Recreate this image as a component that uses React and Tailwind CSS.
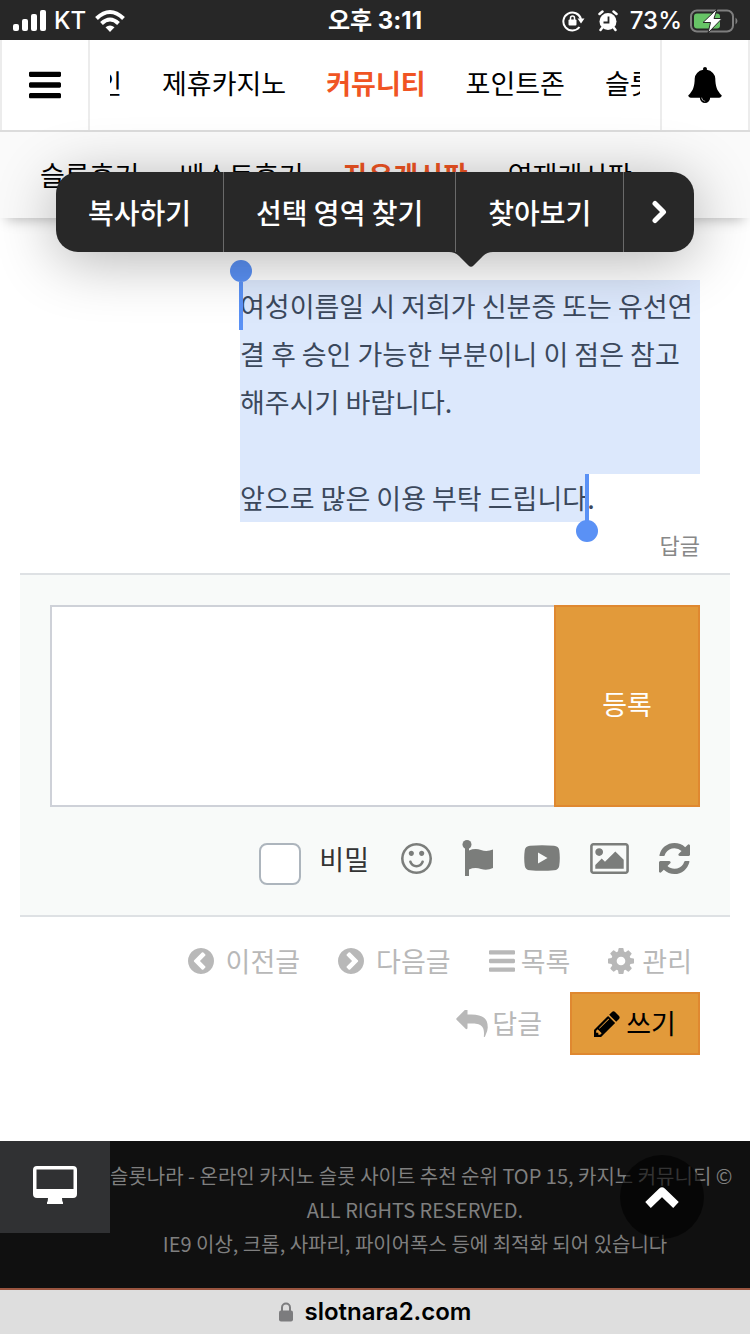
import React, { useState } from 'react';

const MENU = [
  { label: '제휴카지노' },
  { label: '커뮤니티', active: true },
  { label: '포인트존' },
  { label: '슬롯' },
];

const SUB_MENU = [
  { label: '슬롯후기' },
  { label: '베스트후기' },
  { label: '자유게시판', active: true },
  { label: '연재게시판' },
];

const CIRCLE = 'm0 0q0 209-103 385.5t-279.5 279.5-385.5 103-385.5-103-279.5-279.5-103-385.5 103-385.5 279.5-279.5 385.5-103 385.5 103 279.5 279.5 103 385.5z';

const ICONS = {
  bars: 'M1664 1344v128q0 26-19 45t-45 19h-1408q-26 0-45-19t-19-45v-128q0-26 19-45t45-19h1408q26 0 45 19t19 45zm0-512v128q0 26-19 45t-45 19h-1408q-26 0-45-19t-19-45v-128q0-26 19-45t45-19h1408q26 0 45 19t19 45zm0-512v128q0 26-19 45t-45 19h-1408q-26 0-45-19t-19-45v-128q0-26 19-45t45-19h1408q26 0 45 19t19 45z',
  bell: 'M912 1696q0-16-16-16-59 0-101.5-42.5t-42.5-101.5q0-16-16-16t-16 16q0 73 51.5 124.5t124.5 51.5q16 0 16-16zm816-288q0 52-38 90t-90 38h-448q0 106-75 181t-181 75-181-75-75-181h-448q-52 0-90-38t-38-90q50-42 91-88t85-119.5 74.5-158.5 50-206 19.5-260q0-152 117-282.5t307-158.5q-8-19-8-39 0-40 28-68t68-28 68 28 28 68q0 20-8 39 190 28 307 158.5t117 282.5q0 139 19.5 260t50 206 74.5 158.5 85 119.5 91 88z',
  smile: 'M1262 1075q-37 121-138 195t-228 74-228-74-138-195q-8-25 4-48.5t38-31.5q25-8 48.5 4t31.5 38q25 80 92.5 129.5t151.5 49.5 151.5-49.5 92.5-129.5q8-26 32-38t49-4 37 31.5 4 48.5zm-494-435q0 53-37.5 90.5t-90.5 37.5-90.5-37.5-37.5-90.5 37.5-90.5 90.5-37.5 90.5 37.5 37.5 90.5zm512 0q0 53-37.5 90.5t-90.5 37.5-90.5-37.5-37.5-90.5 37.5-90.5 90.5-37.5 90.5 37.5 37.5 90.5zm256 256q0-130-51-248.5t-136.5-204-204-136.5-248.5-51-248.5 51-204 136.5-136.5 204-51 248.5 51 248.5 136.5 204 204 136.5 248.5 51 248.5-51 204-136.5 136.5-204 51-248.5z' + 'M1664 896' + CIRCLE,
  left: 'M1037 1395l102-102q19-19 19-45t-19-45l-307-307 307-307q19-19 19-45t-19-45l-102-102q-19-19-45-19t-45 19l-454 454q-19 19-19 45t19 45l454 454q19 19 45 19t45-19z' + 'M1664 896' + CIRCLE,
  right: 'M845 1395l454-454q19-19 19-45t-19-45l-454-454q-19-19-45-19t-45 19l-102 102q-19 19-19 45t19 45l307 307-307 307q-19 19-19 45t19 45l102 102q19 19 45 19t45-19z' + 'M1664 896' + CIRCLE,
  cog: 'M1152 896q0-106-75-181t-181-75-181 75-75 181 75 181 181 75 181-75 75-181zm512-109v222q0 12-8 23t-20 13l-185 28q-19 54-39 91 35 50 107 138 10 12 10 25t-9 23q-27 37-99 108t-94 71q-12 0-26-9l-138-108q-44 23-91 38-16 136-29 186-7 28-36 28h-222q-14 0-24.5-8.5t-11.5-21.5l-28-184q-49-16-90-37l-141 107q-10 9-25 9-14 0-25-11-126-114-165-168-7-10-7-23 0-12 8-23 15-21 51-66.5t54-70.5q-27-50-41-99l-183-27q-13-2-21-12.5t-8-23.5v-222q0-12 8-23t19-13l186-28q14-46 39-92-40-57-107-138-10-12-10-24 0-10 9-23 26-36 98.5-107.5t94.5-71.5q13 0 26 10l138 107q44-23 91-38 16-136 29-186 7-28 36-28h222q14 0 24.5 8.5t11.5 21.5l28 184q49 16 90 37l142-107q9-9 24-9 13 0 25 10 129 119 165 170 7 8 7 22 0 12-8 23-15 21-51 66.5t-54 70.5q26 50 41 98l183 28q13 2 21 12.5t8 23.5z',
  reply: 'M1792 1120q0 166-127 451-3 7-10.5 24t-13.5 30-13 22q-12 17-28 17-15 0-23.5-10t-8.5-25q0-9 2.5-26.5t2.5-23.5q5-68 5-123 0-101-17.5-181t-48.5-138.5-80-101-105.5-69.5-133-42.5-154-21.5-175.5-6h-224v256q0 26-19 45t-45 19-45-19l-512-512q-19-19-19-45t19-45l512-512q19-19 45-19t45 19 19 45v256h224q713 0 875 403 53 134 53 333z',
  pencil: 'M491 1536l91-91-235-235-91 91v107h128v128h107zm523-928q0-22-22-22-10 0-17 7l-542 542q-7 7-7 17 0 22 22 22 10 0 17-7l542-542q7-7 7-17zm-54-192l416 416-832 832h-416v-416zm683 96q0 53-37 90l-166 166-416-416 166-165q36-38 90-38 53 0 91 38l235 234q37 39 37 91z',
  refresh: 'M1639 1056q0 5-1 7-64 268-268 434.5t-478 166.5q-146 0-282.5-55t-243.5-157l-129 129q-19 19-45 19t-45-19-19-45v-448q0-26 19-45t45-19h448q26 0 45 19t19 45-19 45l-137 137q71 66 161 102t187 36q134 0 250-65t186-179q11-17 53-117 8-23 30-23h192q13 0 22.5 9.5t9.5 22.5zm25-800v448q0 26-19 45t-45 19h-448q-26 0-45-19t-19-45 19-45l138-138q-148-137-349-137-134 0-250 65t-186 179q-11 17-53 117-8 23-30 23h-199q-13 0-22.5-9.5t-9.5-22.5v-7q65-268 270-434.5t480-166.5q146 0 284 55.5t245 156.5l130-129q19-19 45-19t45 19 19 45z',
  image: 'M576 576q0 80-56 136t-136 56-136-56-56-136 56-136 136-56 136 56 56 136zm1024 384v448h-1408v-192l320-320 160 160 512-512zm96-704h-1600q-13 0-22.5 9.5t-9.5 22.5v1216q0 13 9.5 22.5t22.5 9.5h1600q13 0 22.5-9.5t9.5-22.5v-1216q0-13-9.5-22.5t-22.5-9.5zm160 32v1216q0 66-47 113t-113 47h-1600q-66 0-113-47t-47-113v-1216q0-66 47-113t113-47h1600q66 0 113 47t47 113z',
};

function Icon({ name, box = '128 128 1536 1536', className }) {
  return (
    <svg viewBox={box} className={`shrink-0 ${className}`} fill="currentColor" aria-hidden="true">
      <path d={ICONS[name]} />
    </svg>
  );
}

function StatusBar() {
  return (
    <div className="grid h-10 grid-cols-[1fr_auto_1fr] items-center bg-[#272727] px-3 pt-0.5 font-['Inter','Noto_Sans_CJK_KR',sans-serif] text-2xl font-medium text-white">
      <div className="flex items-center gap-2">
        <svg viewBox="0 0 34 22" className="h-[22px] w-[34px]" fill="currentColor" aria-hidden="true">
          <rect x="1" y="14" width="6" height="7" rx="2" />
          <rect x="10" y="9" width="6" height="12" rx="2" />
          <rect x="19" y="4" width="6" height="17" rx="2" />
          <rect x="28" y="0" width="6" height="21" rx="2" />
        </svg>
        <span>KT</span>
        <svg viewBox="0 0 32 24" className="h-6 w-8" fill="none" stroke="currentColor" strokeWidth="4" aria-hidden="true">
          <path d="M2.5 9.5Q16-3.500 29.500 9.500" />
          <path d="M7.500 14.500Q16 6.500 24.500 14.500" />
          <path d="M16 23l-4.500-4.800q4.500-3.600 9 0z" fill="currentColor" stroke="none" />
        </svg>
      </div>
      <div className="font-bold">오후 3:11</div>
      <div className="flex items-center justify-end gap-2">
        <svg viewBox="0 0 24 22" className="h-[22px] w-6" fill="none" stroke="currentColor" strokeWidth="2" aria-hidden="true">
          <path d="M17.500 17A9 9 0 1 1 19 9" />
          <path d="M15.500 8.500h7l-3.500 5z" fill="currentColor" stroke="none" />
          <rect x="6.500" y="9.500" width="8" height="6" rx="1" fill="currentColor" stroke="none" />
          <path d="M8.500 10V8a2 2 0 0 1 4 0v2" strokeWidth="1.500" />
        </svg>
        <svg viewBox="0 0 20 22" className="mx-1 h-[22px] w-5" aria-hidden="true">
          <circle cx="10" cy="11.500" r="8.500" fill="currentColor" />
          <path d="M1.500 4l3-2.500M18.500 4l-3-2.500M4 18l-1.500 2M16 18l1.500 2" stroke="currentColor" strokeWidth="2.500" strokeLinecap="round" />
          <path d="M10.500 6.500v6h-5" stroke="#272727" strokeWidth="1.800" fill="none" />
        </svg>
        <span>73%</span>
        <svg viewBox="0 0 48 24" className="h-6 w-12" aria-hidden="true">
          <rect x="1" y="1.500" width="42" height="21" rx="6" fill="none" stroke="#7e7e7e" strokeWidth="2" />
          <path d="M45.500 8.500q4 3.500 0 7z" fill="#7e7e7e" />
          <rect x="4" y="4.500" width="26" height="15" rx="3" fill="#67c466" />
          <path d="M27 0L13 13.500h7.500L18 24 32 9.500h-8z" fill="#fff" stroke="#272727" strokeWidth="1" />
        </svg>
      </div>
    </div>
  );
}

function ContextMenu() {
  const item = 'flex items-center border-r border-[#6a6a6a] px-8 whitespace-nowrap';
  return (
    <div className="absolute inset-x-14 top-[172px] z-20">
      <div className="flex h-20 rounded-[22px] bg-[#282828] text-[28px] font-medium text-white shadow-[0_8px_60px_rgba(0,0,0,0.3)]">
        <button className={item}>복사하기</button>
        <button className={item}>선택 영역 찾기</button>
        <button className={item}>찾아보기</button>
        <button className="flex flex-1 items-center justify-center" aria-label="더 보기">
          <svg viewBox="0 0 16 24" className="h-6 w-4" fill="none" stroke="currentColor" strokeWidth="5" strokeLinecap="round" strokeLinejoin="round" aria-hidden="true">
            <path d="M4 3.500L12.500 12 4 20.500" />
          </svg>
        </button>
      </div>
      <svg viewBox="0 0 44 16" className="absolute top-full left-[65%] h-4 w-11 -translate-x-1/2" fill="#282828" aria-hidden="true">
        <path d="M0 0Q6 0 10 4L19.500 13.500Q22 16 24.500 13.500L34 4Q38 0 44 0z" />
      </svg>
    </div>
  );
}

function Handle({ className, top }) {
  return (
    <span className={`absolute flex w-[22px] flex-col items-center ${className}`}>
      {top && <span className="size-[22px] shrink-0 rounded-full bg-[#5a91f5]" />}
      <span className="h-12 w-1 shrink-0 bg-[#5a91f5]" />
      {!top && <span className="-mt-0.5 size-[22px] shrink-0 rounded-full bg-[#5a91f5]" />}
    </span>
  );
}

export default function App() {
  const [comment, setComment] = useState('');
  const [secret, setSecret] = useState(false);

  return (
    <div className="relative flex min-h-screen flex-col overflow-hidden bg-white font-['Noto_Sans_CJK_KR',sans-serif] text-[27px] text-black">
      <StatusBar />

      {/* Header */}
      <header className="flex h-[92px] border-b-2 border-[#dcdcdc]">
        <button className="flex w-[90px] shrink-0 items-center justify-center border-x-2 border-[#ececec]" aria-label="메뉴">
          <Icon name="bars" className="size-8" />
        </button>
        <nav className="mx-5 flex min-w-0 flex-1 items-center gap-10 overflow-hidden pb-1 whitespace-nowrap">
          <a href="#main" className="flex w-3 shrink-0 justify-end overflow-hidden"><span>인</span></a>
          {MENU.map(m => (
            <a key={m.label} href="#menu" className={m.active ? 'font-bold text-[#f05423]' : ''}>{m.label}</a>
          ))}
        </nav>
        <button className="flex w-[90px] shrink-0 items-center justify-center border-x-2 border-[#ececec]" aria-label="알림">
          <Icon name="bell" box="0 0 1792 1792" className="size-9" />
        </button>
      </header>

      <nav className="flex h-[86px] items-center gap-10 bg-[#fafafa] px-10 whitespace-nowrap shadow-[0_8px_12px_-6px_rgba(0,0,0,0.25)]">
        {SUB_MENU.map(m => (
          <a key={m.label} href="#sub" className={m.active ? 'font-bold text-[#f05423]' : ''}>{m.label}</a>
        ))}
      </nav>

      <ContextMenu />

      <main className="flex-1 pt-[62px]">
        {/* Comment with selected text */}
        <div className="relative ml-60 mr-[50px] leading-[48px] text-[#3b485c]">
          <div className="h-[194px] bg-[#dce8fc] pt-0.5 whitespace-nowrap">
            여성이름일 시 저희가 신분증 또는 유선연<br />
            결 후 승인 가능한 부분이니 이 점은 참고<br />
            해주시기 바랍니다.
          </div>
          <div className="flex">
            <span className="relative bg-[#dce8fc]">
              앞으로 많은 이용 부탁 드립니다
              <Handle className="top-0 -right-[11px]" />
            </span>
            .
          </div>
          <Handle top className="-top-5 -left-2.5" />
        </div>
        <div className="flex justify-end px-[50px] pt-1.5 pb-[13px]">
          <button className="text-[22px] leading-8 text-[#888]">답글</button>
        </div>

        {/* Comment form */}
        <form className="mx-5 border-y-2 border-[#dee1e4] bg-[#f8faf9] p-[30px]" onSubmit={e => e.preventDefault()}>
          <div className="flex h-[202px]">
            <textarea
              aria-label="댓글"
              value={comment}
              onChange={e => setComment(e.target.value)}
              className="min-w-0 flex-1 resize-none border-2 border-r-0 border-[#ced1d8] bg-white p-4"
            />
            <button className="w-[146px] border-2 border-[#df8830] bg-[#e29a3a] pb-1 text-white">등록</button>
          </div>
          <div className="mt-9 flex h-[42px] items-start justify-end pr-2.5 text-[#7b7d7b]">
            <label className="mr-8 flex gap-[18px] text-[#333] leading-8">
              <input
                type="checkbox"
                checked={secret}
                onChange={e => setSecret(e.target.checked)}
                className="size-[42px] appearance-none rounded-lg border-2 border-[#adb5bd] bg-white checked:bg-[#adb5bd]"
              />
              비밀
            </label>
            <div className="flex h-[30px] items-center gap-[30px]">
              <button type="button" aria-label="이모티콘"><Icon name="smile" className="size-[31px]" /></button>
              <button type="button" aria-label="아이콘">
                <svg viewBox="0 0 32 36" className="h-9 w-8" fill="currentColor" aria-hidden="true">
                  <circle cx="5" cy="4.500" r="4.500" />
                  <path d="M3 6h4v30H3zM7 10.500q6-2.500 12-.5t12-.5V28q-6 3-12 1t-12 .5z" />
                </svg>
              </button>
              <button type="button" aria-label="동영상">
                <svg viewBox="0 0 36 26" className="h-[26px] w-9" fill="currentColor" aria-hidden="true">
                  <path fillRule="evenodd" d="M6 .7Q18-.3 30 .7 34.500 1 35.200 5q1.200 8 0 16-.7 4-5.200 4.300-12 1-24 0Q1.500 25 .8 21-.4 13 .8 5 1.500 1 6 .7zM14 7.500v11l9.500-5.500z" />
                </svg>
              </button>
              <button type="button" aria-label="이미지"><Icon name="image" box="-64 128 1920 1536" className="h-[31px] w-[39px]" /></button>
              <button type="button" aria-label="새로고침"><Icon name="refresh" className="size-[31px]" /></button>
            </div>
          </div>
        </form>

        {/* Post navigation */}
        <div className="flex flex-col items-end px-[50px] pt-7 text-[#b8b8b8]">
          <div className="flex h-8 items-center gap-[38px] pr-2 whitespace-nowrap">
            <a href="#prev" className="flex items-center gap-3"><Icon name="left" className="size-[26px]" />이전글</a>
            <a href="#next" className="flex items-center gap-3"><Icon name="right" className="size-[26px]" />다음글</a>
            <a href="#list" className="flex items-center gap-1.5"><Icon name="bars" className="size-[26px]" />목록</a>
            <a href="#admin" className="flex items-center gap-2"><Icon name="cog" className="size-[26px]" />관리</a>
          </div>
          <div className="mt-[15px] flex items-center gap-7">
            <a href="#reply" className="flex items-center gap-1"><Icon name="reply" box="0 128 1792 1536" className="h-[27px] w-8" />답글</a>
            <a href="#write" className="flex h-[63px] w-[130px] items-center justify-center gap-1.5 border-2 border-[#df8830] bg-[#e29a3a] text-black">
              <Icon name="pencil" className="size-[26px]" />쓰기
            </a>
          </div>
        </div>
      </main>

      {/* Footer */}
      <footer className="relative flex h-[147px] items-start bg-[#101010] text-[20px] leading-[34px] text-[#7f7f7f]">
        <a href="#pc" aria-label="PC 버전" className="flex h-[92px] w-[110px] shrink-0 items-center justify-center bg-[#303133] pb-1 text-white">
          <svg viewBox="0 0 44 38" className="h-[38px] w-11" fill="currentColor" aria-hidden="true">
            <path fillRule="evenodd" d="M4 0h36q4 0 4 4v24q0 4-4 4H29q0 3 1 4.500V38H14v-1.500q1-1.500 1-4.500H4q-4 0-4-4V4q0-4 4-4zM3.500 3.500v19.500h37V3.500z" />
          </svg>
        </a>
        <p className="min-w-0 flex-1 pt-[18px] pr-[30px] text-center">
          <span className="whitespace-nowrap">슬롯나라 - 온라인 카지노 슬롯 사이트 추천 순위 TOP 15, 카지노 커뮤니티 ©</span><br />
          ALL RIGHTS RESERVED.<br />
          IE9 이상, 크롬, 사파리, 파이어폭스 등에 최적화 되어 있습니다
        </p>
        <button aria-label="맨 위로" className="absolute top-3.5 right-[46px] flex size-[84px] items-center justify-center rounded-full bg-black/60 text-white">
          <svg viewBox="0 0 36 24" className="h-6 w-9" fill="none" stroke="currentColor" strokeWidth="8" strokeLinejoin="round" aria-hidden="true">
            <path d="M4 20L18 6.500 32 20" />
          </svg>
        </button>
      </footer>

      {/* Browser bar */}
      <div className="flex h-[46px] items-center justify-center gap-3 border-t-2 border-[#9a5540] bg-[#dedede] font-['Inter',sans-serif] text-2xl font-semibold">
        <svg viewBox="0 0 14 20" className="h-5 w-3.5" aria-hidden="true">
          <rect y="8.500" width="14" height="11" rx="2" fill="#7c7c7e" />
          <path d="M3 9V5.500a4 4 0 0 1 8 0V9" fill="none" stroke="#7c7c7e" strokeWidth="2" />
        </svg>
        <span>slotnara2.com</span>
      </div>
    </div>
  );
}
